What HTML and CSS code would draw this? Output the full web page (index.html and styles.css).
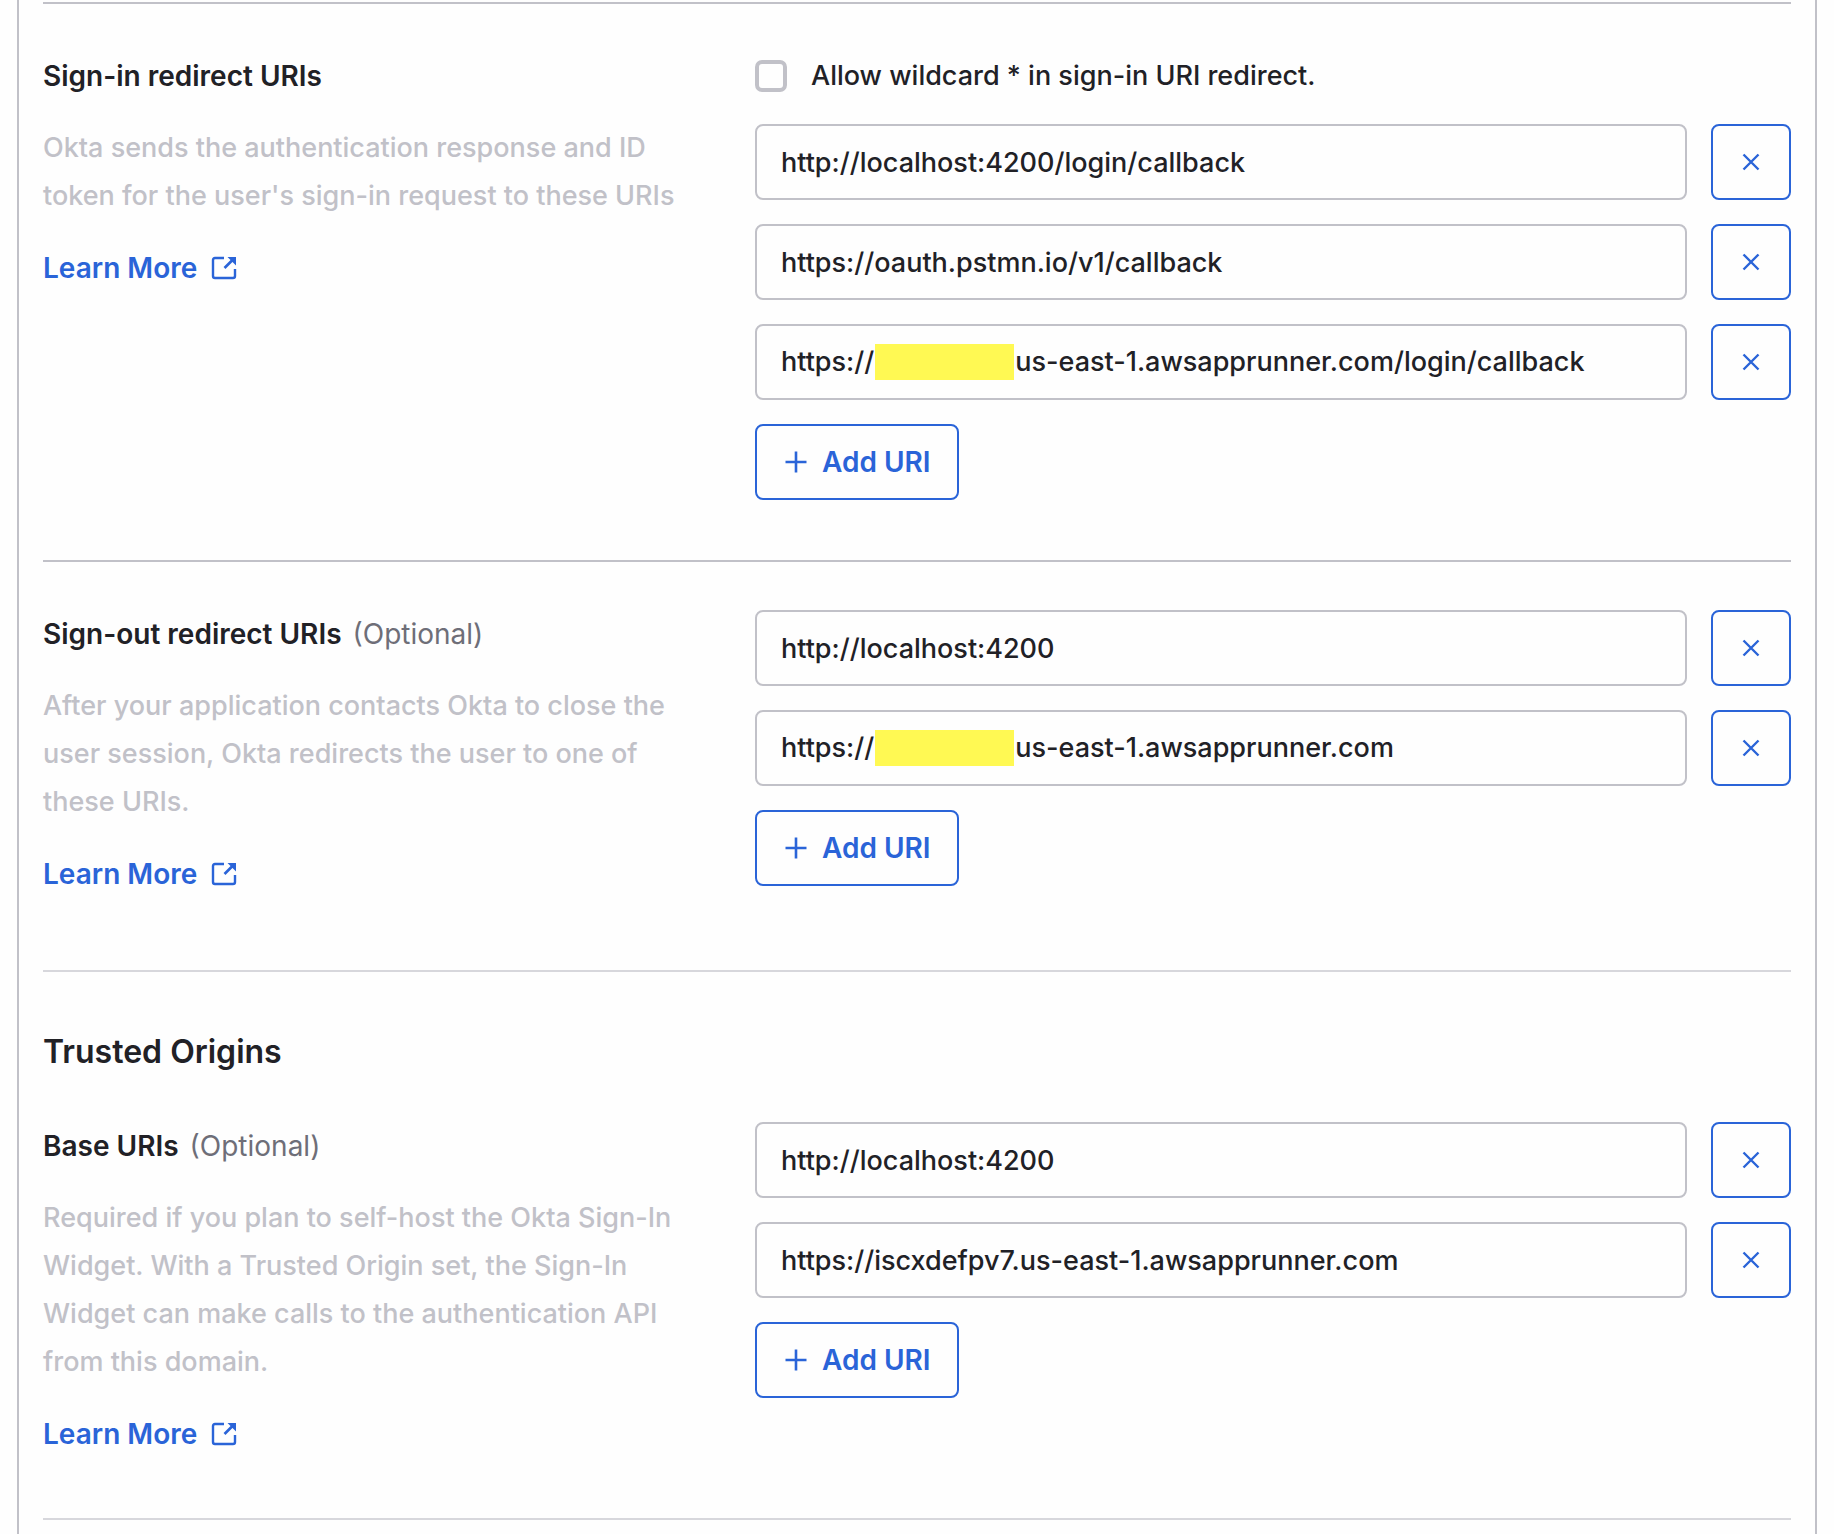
FILE: index.html
```html
<!DOCTYPE html>
<html lang="en">
<head>
<meta charset="utf-8">
<meta name="viewport" content="width=device-width, initial-scale=1">
<title>Application settings</title>
<link rel="stylesheet" href="styles.css">
</head>
<body>
<svg width="0" height="0" class="sprite" aria-hidden="true">
  <symbol id="icon-external" viewBox="0 0 26 24">
    <path d="M13 2H4Q2 2 2 4V20Q2 22 4 22H22Q24 22 24 20V13" fill="none" stroke="currentColor" stroke-width="2.400"/>
    <path d="M13.500 12L22 3.500" fill="none" stroke="currentColor" stroke-width="2.600"/>
    <path d="M16.500 1H25V9.500Z" fill="currentColor"/>
  </symbol>
  <symbol id="icon-close" viewBox="0 0 18 18">
    <path d="M1.500 1.500L16.500 16.500M16.500 1.500L1.500 16.500" fill="none" stroke="currentColor" stroke-width="2.400"/>
  </symbol>
  <symbol id="icon-plus" viewBox="0 0 22 22">
    <path d="M11 0.500V21.500M0.500 11H21.500" fill="none" stroke="currentColor" stroke-width="2.600"/>
  </symbol>
</svg>
<main class="panel">
  <section class="section">
    <div class="setting">
      <div class="info">
        <h3 class="label">Sign-in redirect URIs</h3>
        <p class="help">Okta sends the authentication response and ID token for the user's sign-in request to these URIs</p>
        <a class="more" href="#sign-in">Learn More <svg class="icon-external"><use href="#icon-external"/></svg></a>
      </div>
      <div class="fields">
        <label class="check"><input class="checkbox" type="checkbox"><span>Allow wildcard * in sign-in URI redirect.</span></label>
        <div class="row">
          <input class="field" type="text" aria-label="Sign-in redirect URI 1" value="http://localhost:4200/login/callback">
          <button class="btn remove" type="button" aria-label="Remove"><svg class="icon-close"><use href="#icon-close"/></svg></button>
        </div>
        <div class="row">
          <input class="field" type="text" aria-label="Sign-in redirect URI 2" value="https://oauth.pstmn.io/v1/callback">
          <button class="btn remove" type="button" aria-label="Remove"><svg class="icon-close"><use href="#icon-close"/></svg></button>
        </div>
        <div class="row">
          <label class="field masked"><span>https://</span><span class="mask"></span><input class="rest" type="text" aria-label="Sign-in redirect URI 3" value="us-east-1.awsapprunner.com/login/callback"></label>
          <button class="btn remove" type="button" aria-label="Remove"><svg class="icon-close"><use href="#icon-close"/></svg></button>
        </div>
        <button class="btn add" type="button"><svg class="icon-plus"><use href="#icon-plus"/></svg>Add URI</button>
      </div>
    </div>
  </section>

  <section class="section section-last">
    <div class="setting">
      <div class="info">
        <h3 class="label">Sign-out redirect URIs <span class="optional">(Optional)</span></h3>
        <p class="help">After your application contacts Okta to close the user session, Okta redirects the user to one of these URIs.</p>
        <a class="more" href="#sign-out">Learn More <svg class="icon-external"><use href="#icon-external"/></svg></a>
      </div>
      <div class="fields">
        <div class="row">
          <input class="field" type="text" aria-label="Sign-out redirect URI 1" value="http://localhost:4200">
          <button class="btn remove" type="button" aria-label="Remove"><svg class="icon-close"><use href="#icon-close"/></svg></button>
        </div>
        <div class="row">
          <label class="field masked"><span>https://</span><span class="mask"></span><input class="rest" type="text" aria-label="Sign-out redirect URI 2" value="us-east-1.awsapprunner.com"></label>
          <button class="btn remove" type="button" aria-label="Remove"><svg class="icon-close"><use href="#icon-close"/></svg></button>
        </div>
        <button class="btn add" type="button"><svg class="icon-plus"><use href="#icon-plus"/></svg>Add URI</button>
      </div>
    </div>
  </section>

  <section class="section section-light">
    <h2 class="title">Trusted Origins</h2>
    <div class="setting">
      <div class="info">
        <h3 class="label">Base URIs <span class="optional">(Optional)</span></h3>
        <p class="help">Required if you plan to self-host the Okta Sign-In Widget. With a Trusted Origin set, the Sign-In Widget can make calls to the authentication API from this domain.</p>
        <a class="more" href="#origins">Learn More <svg class="icon-external"><use href="#icon-external"/></svg></a>
      </div>
      <div class="fields">
        <div class="row">
          <input class="field" type="text" aria-label="Base URI 1" value="http://localhost:4200">
          <button class="btn remove" type="button" aria-label="Remove"><svg class="icon-close"><use href="#icon-close"/></svg></button>
        </div>
        <div class="row">
          <input class="field" type="text" aria-label="Base URI 2" value="https://iscxdefpv7.us-east-1.awsapprunner.com">
          <button class="btn remove" type="button" aria-label="Remove"><svg class="icon-close"><use href="#icon-close"/></svg></button>
        </div>
        <button class="btn add" type="button"><svg class="icon-plus"><use href="#icon-plus"/></svg>Add URI</button>
      </div>
    </div>
  </section>
  <hr class="end">
</main>
</body>
</html>
```

FILE: styles.css
```css
* {
  box-sizing: border-box;
}

body {
  margin: 0;
  background: #fefefe;
  color: #212126;
  font: 500 27px/48px Inter, "Liberation Sans", sans-serif;
}

.sprite {
  position: absolute;
}

.panel {
  min-height: 100vh;
  margin: 0 17px;
  padding: 2px 24px 0;
  border: solid #c1c1c8;
  border-width: 0 2px;
}

.section {
  padding: 48px 0 60px;
  border-top: 2px solid #c1c1c8;
}

.section-last {
  padding-bottom: 72px;
}

.section-light {
  border-top-color: #d7d7dc;
}

.end {
  height: 2px;
  margin: 0;
  border: 0;
  background: #d7d7dc;
}

.title {
  margin: 0 0 38px;
  font-size: 32px;
  font-weight: 600;
  line-height: 64px;
}

.setting {
  display: grid;
  grid-template-columns: minmax(0, 640px) minmax(0, 1fr);
  column-gap: 72px;
}

.info,
.fields {
  display: flex;
  flex-direction: column;
  align-items: flex-start;
  gap: 24px;
}

.label {
  margin: 0;
  font-size: 28px;
  font-weight: 600;
}

.optional {
  margin-left: 4px;
  color: #6e6e78;
  font-weight: 400;
}

.help {
  margin: 0;
  color: #c1c1c8;
}

.more {
  display: flex;
  align-items: center;
  gap: 14px;
  color: #2a64d8;
  font-size: 28px;
  font-weight: 600;
  text-decoration: none;
}

.icon-external {
  width: 26px;
  height: 24px;
}

.check {
  display: flex;
  align-items: center;
  gap: 24px;
}

.checkbox {
  appearance: none;
  width: 32px;
  height: 32px;
  margin: 0;
  border: 4px solid #c1c1c8;
  border-radius: 7px;
}

.row {
  display: flex;
  gap: 24px;
  width: 100%;
}

.field {
  flex: 1;
  min-width: 0;
  height: 76px;
  padding: 0 24px;
  border: 2px solid #c1c1c8;
  border-radius: 8px;
  background: none;
  color: inherit;
  font: inherit;
}

.masked {
  display: flex;
  align-items: center;
}

.mask {
  flex: none;
  width: 139px;
  height: 36px;
  margin: 0 1px;
  background: #fff953;
}

.rest {
  flex: 1;
  min-width: 0;
  padding: 0;
  border: 0;
  background: none;
  color: inherit;
  font: inherit;
}

.btn {
  display: flex;
  align-items: center;
  justify-content: center;
  height: 76px;
  border: 2px solid #2a64d8;
  border-radius: 8px;
  background: none;
  color: #2a64d8;
  font: inherit;
  font-size: 28px;
  font-weight: 600;
}

.remove {
  flex: none;
  width: 80px;
  padding: 0;
}

.add {
  gap: 15px;
  padding: 0 26px 0 28px;
}

.icon-close {
  width: 18px;
  height: 18px;
}

.icon-plus {
  width: 22px;
  height: 22px;
}
```
